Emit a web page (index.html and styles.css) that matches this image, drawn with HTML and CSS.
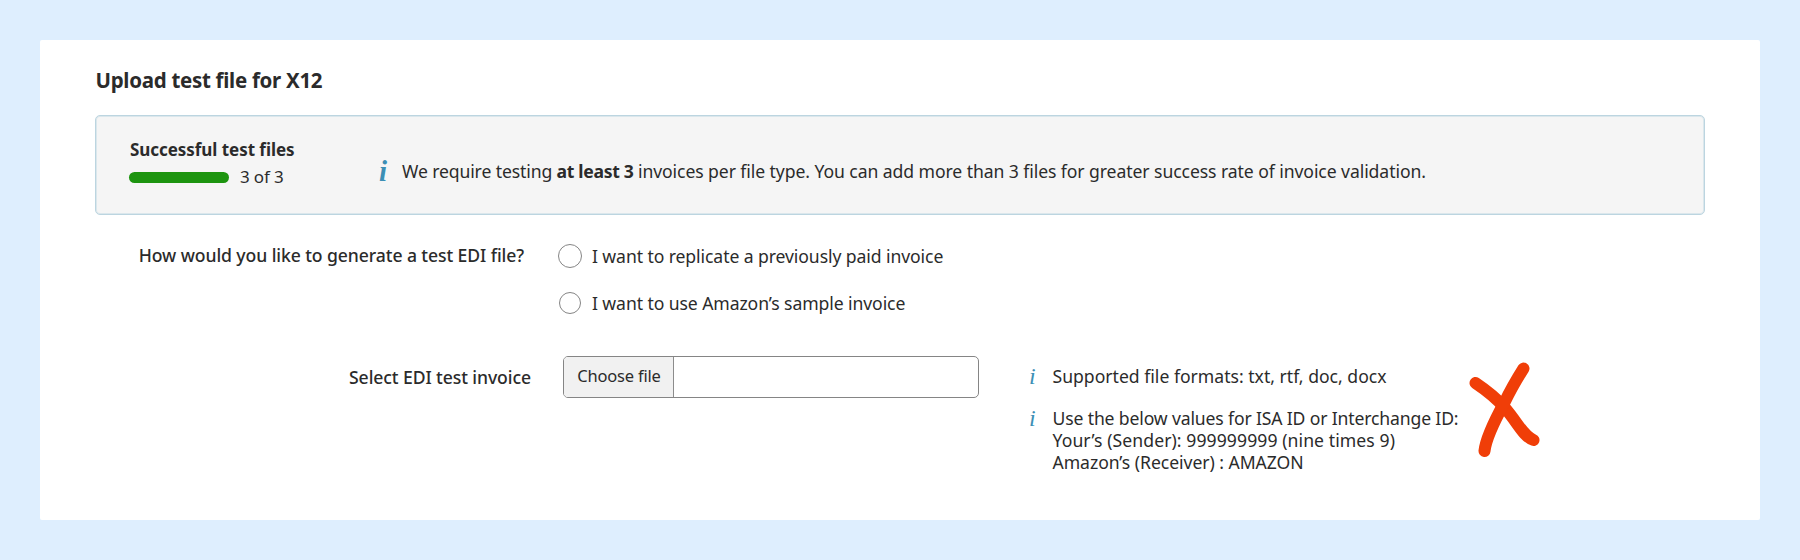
FILE: index.html
```html
<!DOCTYPE html>
<html lang="en">
<head>
<meta charset="utf-8">
<title>Upload test file for X12</title>
<link rel="stylesheet" href="styles.css">
</head>
<body>
<main class="card">
  <h1 class="title">Upload test file for X12</h1>
  <section class="status">
    <div class="progress">
      <h2 class="progress-title">Successful test files</h2>
      <div class="progress-row">
        <div class="bar"></div>
        <span class="count">3 of 3</span>
      </div>
    </div>
    <div class="notice">
      <span class="info info-bold">i</span>
      <p class="notice-text"><span class="lead">We require testing </span><strong>at least 3</strong> invoices per file type. You can add more than 3 files for greater success rate of invoice validation.</p>
    </div>
  </section>
  <section class="question">
    <div class="label">How would you like to generate a test EDI file?</div>
    <div class="options">
      <label class="option"><span class="radio radio-large"></span><span class="option-text">I want to replicate a previously paid invoice</span></label>
      <label class="option"><span class="radio"></span><span class="option-text">I want to use Amazon’s sample invoice</span></label>
    </div>
  </section>
  <section class="upload">
    <div class="label label-upload">Select EDI test invoice</div>
    <div class="file">
      <button class="choose" type="button">Choose file</button>
      <div class="file-name"></div>
    </div>
    <div class="tips">
      <div class="tip"><span class="info">i</span><p class="formats">Supported file formats: txt, rtf, doc, docx</p></div>
      <div class="tip"><span class="info">i</span><p><span class="ids">Use the below values for ISA ID or Interchange ID:</span><br><span class="sender">Your’s (Sender): 999999999 (nine times 9)</span><br><span class="receiver">Amazon’s (Receiver) : AMAZON</span></p></div>
    </div>
    <svg class="cross" width="72" height="98" viewBox="0 0 72 98" fill="none" stroke="#f03e08" stroke-width="12" stroke-linecap="round" stroke-linejoin="round">
      <path d="M7.500 21C18 28 29 37 37 46C50 61 55 74 65.500 78"/>
      <path d="M55.500 6.500C47 20 42 29 36.500 40.500C28 56 18 75 16.500 89"/>
    </svg>
  </section>
</main>
</body>
</html>
```
FILE: styles.css
```css
* { box-sizing: border-box; }
body {
  margin: 0;
  padding: 40px;
  background: #deeefe;
  color: #2b2b2b;
  font: 17.6px/24px "Noto Sans", "Open Sans", sans-serif;
  letter-spacing: -0.09px;
}
h1, h2, p { margin: 0; }
.card {
  height: 480px;
  padding: 26px 55px 0;
  background: #fff;
  border-radius: 2px;
}
.title {
  padding-left: 0.5px;
  font-size: 20.5px;
  line-height: 28px;
  font-weight: 700;
  letter-spacing: -0.29px;
}
.status {
  display: flex;
  height: 100px;
  margin-top: 21px;
  padding: 22px 33px 0;
  background: #f5f5f5;
  border: 1px solid #bcd5e0;
  border-radius: 5px;
  box-shadow: inset 0 0 0 1px #dbe7ec;
}
.progress { width: 250px; }
.progress-title {
  padding-left: 1px;
  font-size: 17px;
  line-height: 24px;
  letter-spacing: -0.05px;
}
.progress-row {
  display: flex;
  align-items: center;
  gap: 11px;
  margin-top: 3px;
}
.bar {
  width: 100px;
  height: 11px;
  margin-top: 1px;
  background: #1d940f;
  border-radius: 6px;
}
.count { font-size: 17px; letter-spacing: -0.15px; }
.notice { display: flex; padding-top: 21px; }
.info {
  flex: none;
  width: 24px;
  color: #3c8fb5;
  font: italic 24px/24px "Liberation Serif", serif;
}
.info-bold {
  width: 23px;
  font-size: 29px;
  font-weight: 700;
}
.notice-text { white-space: nowrap; letter-spacing: -0.08px; }
.lead { letter-spacing: -0.12px; }
.notice-text strong { letter-spacing: -0.33px; }
.question {
  display: flex;
  gap: 34px;
  margin-top: 28px;
}
.label {
  width: 429px;
  font-weight: 500;
  text-align: right;
  letter-spacing: -0.09px;
}
.options {
  display: flex;
  flex-direction: column;
  gap: 23px;
  padding-top: 1px;
}
.option { display: flex; align-items: center; gap: 10px; }
.radio {
  flex: none;
  width: 22px;
  height: 22px;
  margin: 0 1px;
  border: 1px solid #858585;
  border-radius: 50%;
}
.radio-large { width: 24px; height: 24px; margin: 0; }
.upload {
  display: flex;
  margin-top: 41px;
}
.label-upload { width: 436px; padding-top: 9px; }
.file {
  display: flex;
  width: 416px;
  height: 42px;
  margin-left: 32px;
  border: 1px solid #858585;
  border-radius: 5px;
  overflow: hidden;
}
.choose {
  width: 110px;
  padding: 0 0 2px 1px;
  border: 0;
  border-right: 1px solid #8c8c8c;
  background: #f1f1f1;
  color: inherit;
  font: 16.5px/24px "Noto Sans", sans-serif;
  letter-spacing: -0.2px;
}
.file-name { flex: 1; }
.tips {
  width: 439px;
  margin-left: 50px;
  padding-top: 9px;
  white-space: nowrap;
  line-height: 22px;
}
.tip { display: flex; height: 22px; }
.tip + .tip { margin-top: 19.5px; }
.tip .info { width: 23.5px; line-height: 22px; }
.formats { letter-spacing: 0; }
.ids { letter-spacing: -0.15px; }
.sender { letter-spacing: 0.08px; }
.receiver { letter-spacing: -0.05px; }
.cross { margin: 6px 0 0; }
```
